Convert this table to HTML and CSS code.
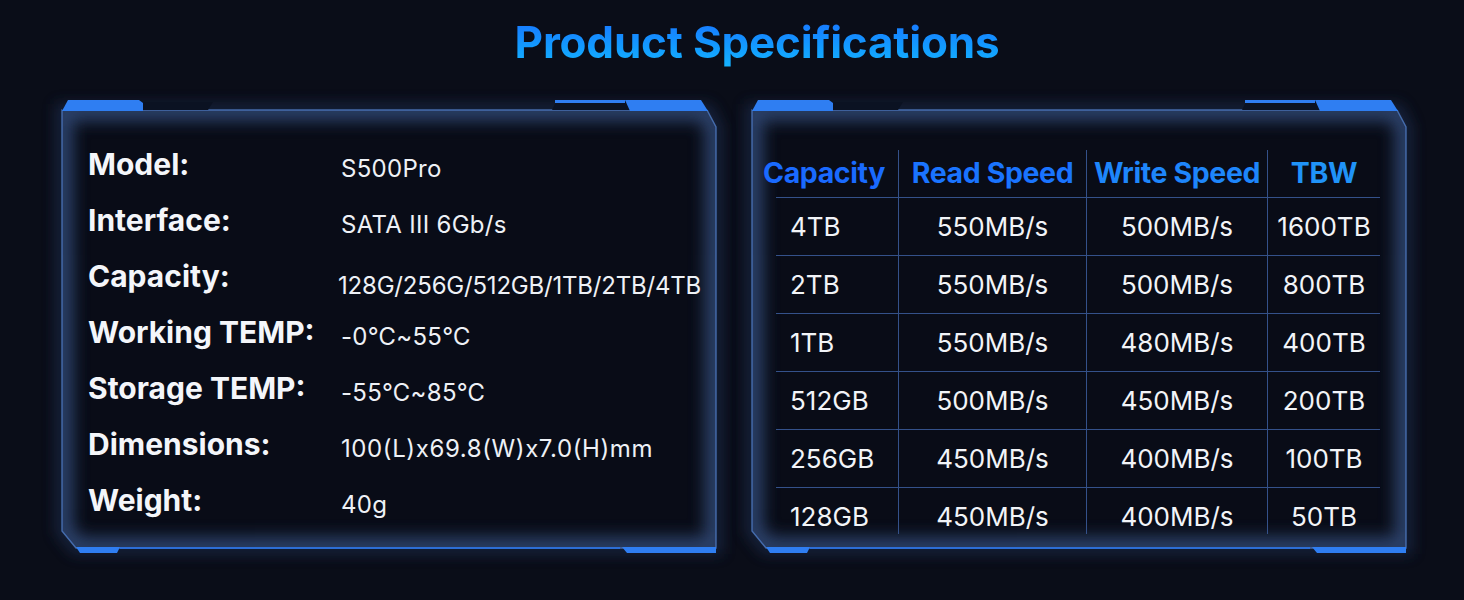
FILE: index.html
```html
<!DOCTYPE html>
<html lang="en">
<head>
<meta charset="utf-8">
<title>Product Specifications</title>
<link rel="stylesheet" href="styles.css">
</head>
<body>
<svg class="defs" width="0" height="0" aria-hidden="true">
  <defs>
    <filter id="blurOuter" x="-20%" y="-20%" width="140%" height="140%"><feGaussianBlur stdDeviation="7"/></filter>
    <filter id="blurInner" x="-20%" y="-20%" width="140%" height="140%"><feGaussianBlur stdDeviation="8"/></filter>
    <filter id="blurEdge" x="-20%" y="-20%" width="140%" height="140%"><feGaussianBlur stdDeviation="2"/></filter>
    <clipPath id="bodyClip"><path d="M0,10 L645,10 L654,27 L654,448 L14,448 L0,431 Z"/></clipPath>
  </defs>
</svg>

<header class="title-bar">
  <h1 class="title">Product Specifications</h1>
</header>

<main class="panels">
  <section class="panel">
    <svg class="frame" viewBox="0 0 654 453" width="654" height="453" aria-hidden="true">
      <path class="f-outer" d="M0,10 L645,10 L654,27 L654,448 L14,448 L0,431 Z"/>
      <path class="f-body" d="M0,10 L645,10 L654,27 L654,448 L14,448 L0,431 Z"/>
      <g clip-path="url(#bodyClip)">
        <path class="f-inner" d="M0,10 L645,10 L654,27 L654,448 L14,448 L0,431 Z"/>
        <path class="f-edgeglow" d="M654,20 L654,448"/>
      </g>
      <path class="f-edge" d="M0,10 L645,10 L654,27 L654,448 L14,448 L0,431 Z"/>
      <path class="f-tab" d="M0,10 L6,2 L151,2 L146,10 Z"/>
      <path class="f-tab" d="M490,10 L494,2 L640,2 L646,10 Z"/>
      <path class="f-blue" d="M0,11 L6,0 L77,0 L81,3 L81,11 Z"/>
      <path class="f-blue" d="M493,0 L563,0 L563,3 L493,3 Z"/>
      <path class="f-blue" d="M563,0 L639,0 L646,11 L568,11 Z"/>
      <path class="f-blue" d="M14,447 L58,447 L55,453 L18,453 Z"/>
      <path class="f-line" d="M58,447 L558,447 L558,449 L58,449 Z"/>
      <path class="f-blue" d="M560,447 L654,447 L654,453 L565,453 Z"/>
    </svg>
    <dl class="specs">
      <div class="spec"><dt>Model:</dt><dd>S500Pro</dd></div>
      <div class="spec"><dt>Interface:</dt><dd>SATA III 6Gb/s</dd></div>
      <div class="spec spec--low"><dt>Capacity:</dt><dd>128G/256G/512GB/1TB/2TB/4TB</dd></div>
      <div class="spec"><dt>Working TEMP:</dt><dd>-0℃~55℃</dd></div>
      <div class="spec"><dt>Storage TEMP:</dt><dd>-55℃~85℃</dd></div>
      <div class="spec"><dt>Dimensions:</dt><dd class="wide">100(L)x69.8(W)x7.0(H)mm</dd></div>
      <div class="spec"><dt>Weight:</dt><dd>40g</dd></div>
    </dl>
  </section>

  <section class="panel">
    <svg class="frame" viewBox="0 0 654 453" width="654" height="453" aria-hidden="true">
      <path class="f-outer" d="M0,10 L645,10 L654,27 L654,448 L14,448 L0,431 Z"/>
      <path class="f-body" d="M0,10 L645,10 L654,27 L654,448 L14,448 L0,431 Z"/>
      <g clip-path="url(#bodyClip)">
        <path class="f-inner" d="M0,10 L645,10 L654,27 L654,448 L14,448 L0,431 Z"/>
        <path class="f-edgeglow" d="M654,20 L654,448"/>
      </g>
      <path class="f-edge" d="M0,10 L645,10 L654,27 L654,448 L14,448 L0,431 Z"/>
      <path class="f-tab" d="M0,10 L6,2 L151,2 L146,10 Z"/>
      <path class="f-tab" d="M490,10 L494,2 L640,2 L646,10 Z"/>
      <path class="f-blue" d="M0,11 L6,0 L77,0 L81,3 L81,11 Z"/>
      <path class="f-blue" d="M493,0 L563,0 L563,3 L493,3 Z"/>
      <path class="f-blue" d="M563,0 L639,0 L646,11 L568,11 Z"/>
      <path class="f-blue" d="M14,447 L58,447 L55,453 L18,453 Z"/>
      <path class="f-line" d="M58,447 L558,447 L558,449 L58,449 Z"/>
      <path class="f-blue" d="M560,447 L654,447 L654,453 L565,453 Z"/>
    </svg>
    <div class="table" role="table">
      <div class="th th--first" role="columnheader"><span class="c1">Capacity</span></div>
      <div class="th c2" role="columnheader">Read Speed</div>
      <div class="th c3" role="columnheader">Write Speed</div>
      <div class="th c4" role="columnheader">TBW</div>

      <div class="td td--first">4TB</div><div class="td">550MB/s</div><div class="td">500MB/s</div><div class="td">1600TB</div>
      <div class="td td--first">2TB</div><div class="td">550MB/s</div><div class="td">500MB/s</div><div class="td">800TB</div>
      <div class="td td--first">1TB</div><div class="td">550MB/s</div><div class="td">480MB/s</div><div class="td">400TB</div>
      <div class="td td--first">512GB</div><div class="td">500MB/s</div><div class="td">450MB/s</div><div class="td">200TB</div>
      <div class="td td--first">256GB</div><div class="td">450MB/s</div><div class="td">400MB/s</div><div class="td">100TB</div>
      <div class="td td--first">128GB</div><div class="td">450MB/s</div><div class="td">400MB/s</div><div class="td">50TB</div>
    </div>
  </section>
</main>
</body>
</html>
```

FILE: styles.css
```css
* { box-sizing: border-box; }

html, body {
  margin: 0;
  padding: 0;
  background: #0a0d18;
}

body {
  width: 1464px;
  height: 600px;
  overflow: hidden;
  font-family: Inter, "Noto Sans", "DejaVu Sans", sans-serif;
  color: #f3f5f9;
}

.defs {
  position: absolute;
  width: 0;
  height: 0;
}

.title-bar {
  height: 100px;
  padding-top: 13px;
  padding-left: 50px;
  text-align: center;
}

.title {
  margin: 0;
  display: inline-block;
  font-size: 44px;
  line-height: 58px;
  font-weight: 700;
  letter-spacing: -0.2px;
  background: linear-gradient(180deg, #1a6dff 0%, #129cff 60%, #16b8ff 100%);
  -webkit-background-clip: text;
  background-clip: text;
  color: transparent;
}

.panels {
  display: flex;
  gap: 36px;
  padding-left: 62px;
}

.panel {
  position: relative;
  width: 654px;
  height: 453px;
}

.frame {
  position: absolute;
  left: 0;
  top: 0;
  overflow: visible;
}

.f-outer {
  fill: none;
  stroke: #22365c;
  stroke-width: 12;
  opacity: 0.6;
  filter: url(#blurOuter);
}

.f-body { fill: #090c17; }

.f-inner {
  fill: none;
  stroke: #34507f;
  stroke-width: 22;
  opacity: 0.8;
  filter: url(#blurInner);
}

.f-edgeglow {
  fill: none;
  stroke: #4f86d8;
  stroke-width: 8;
  opacity: 0.6;
  filter: url(#blurEdge);
}

.f-edge {
  fill: none;
  stroke: #4c78c0;
  stroke-width: 1.4;
  opacity: 0.85;
}

.f-tab { fill: #0b1222; }
.f-blue { fill: #2f7ef2; }
.f-line { fill: #2c6ed6; }

/* left panel: spec list */
.specs {
  position: relative;
  margin: 0;
  padding: 36px 0 0 26px;
}

.spec {
  display: flex;
  align-items: center;
  height: 56px;
}

.spec dt {
  width: 253px;
  flex: none;
  font-size: 30px;
  font-weight: 700;
  color: #f4f6fa;
  letter-spacing: 0;
}

.spec dd {
  margin: 0;
  padding-top: 9px;
  font-size: 24px;
  font-weight: 400;
  color: #eef1f6;
  letter-spacing: 0.3px;
}

.spec dd.wide {
  letter-spacing: 0.6px;
}

.spec--low dd {
  padding-top: 18px;
  margin-left: -3px;
  letter-spacing: -0.2px;
}

/* right panel: table */
.table {
  position: relative;
  margin: 50px 0 0 24px;
  display: grid;
  grid-template-columns: 122px 188px 181px 113px;
  grid-template-rows: 47px repeat(5, 58px) 47px;
  width: 604px;
}

.th {
  display: flex;
  align-items: center;
  justify-content: center;
  font-size: 28.5px;
  font-weight: 700;
  letter-spacing: -0.4px;
  padding-bottom: 2px;
  white-space: nowrap;
}

.th--first {
  justify-content: flex-start;
}

.c1 { margin-left: -13px; color: #1a6aff; }
.c2 { color: #1a74ff; border-left: 1px solid #34518a; }
.c3 { color: #1e86fb; border-left: 1px solid #34518a; }
.c4 { color: #2093f8; border-left: 1px solid #34518a; }

.td {
  text-align: center;
  font-size: 26px;
  line-height: 58px;
  font-weight: 400;
  color: #f2f4f8;
  border-top: 1px solid #34518a;
  border-left: 1px solid #34518a;
  white-space: nowrap;
}

.td--first {
  text-align: left;
  padding-left: 14px;
  border-left: none;
}
```
